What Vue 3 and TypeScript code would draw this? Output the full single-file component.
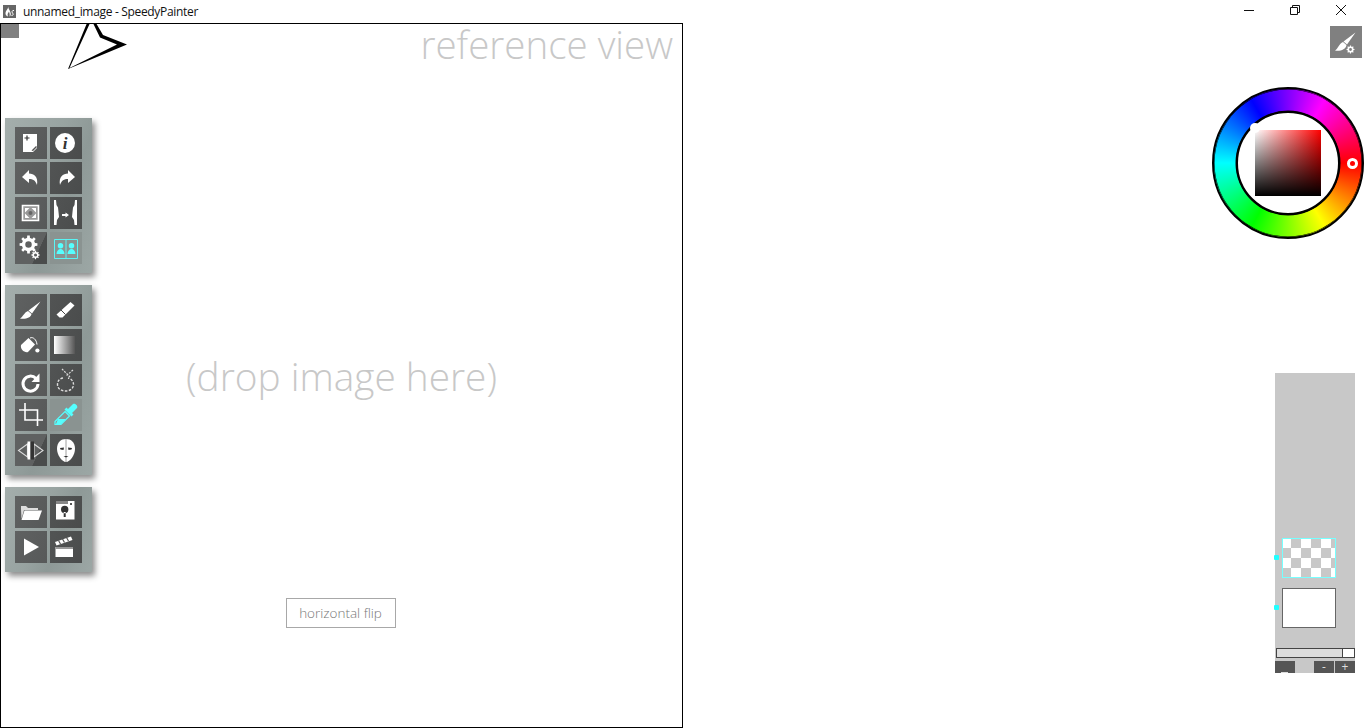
<script setup lang="ts">
interface Shape {
	d?: string
	fill?: string
	stroke?: string
	width?: number
	dash?: string
	text?: string
}

interface Tool {
	name: string
	active?: boolean
	shade?: boolean
}

// builds a toothed wheel path, used for the settings icons
function gear(cx: number, cy: number, r: number, teeth: number): string {
	const pts: string[] = []
	const step = (Math.PI * 2) / teeth
	for (let i = 0; i < teeth; i++) {
		const a = i * step
		const list: [number, number][] = [
			[r * 0.74, a - step * 0.5],
			[r * 0.74, a - step * 0.28],
			[r, a - step * 0.18],
			[r, a + step * 0.18],
			[r * 0.74, a + step * 0.28],
		]
		for (const [rad, ang] of list) {
			pts.push(`${(cx + rad * Math.cos(ang)).toFixed(2)} ${(cy + rad * Math.sin(ang)).toFixed(2)}`)
		}
	}
	const h = r * 0.36
	return (
		`M${pts.join("L")}Z` +
		`M${cx - h} ${cy}a${h} ${h} 0 1 0 ${h * 2} 0a${h} ${h} 0 1 0 ${-h * 2} 0Z`
	)
}

const W = "#fff"
const C = "#5ff"
const D = "#444"

const icons: Record<string, Shape[]> = {
	doc: [
		{ d: "M8 7H22V21L18 25H8Z", fill: W },
		{ d: "M9.500 11H14.500M12 8.500V13.500", stroke: "#333", width: 1.2 },
		{ d: "M16.500 23.500L21 19L22 20L18 24Z", fill: "#555" },
	],
	info: [
		{ d: "M5 16a10 10 0 1 0 20 0a10 10 0 1 0 -20 0Z", fill: W },
		{ text: "i", fill: "#333" },
	],
	undo: [{ d: "M7 15L14 8V11.500C19 11.500 23.500 15 22 23C20.500 18.500 18 17 14 17V21Z", fill: W }],
	redo: [{ d: "M25 15L18 8V11.500C13 11.500 8.500 15 10 23C11.500 18.500 14 17 18 17V21Z", fill: W }],
	fit: [
		{ d: "M7.500 8.500H23.500V23.500H7.500Z", fill: "#9a9a9a", stroke: W, width: 1.600 },
		{ d: "M10 11H14.500L10 15.500ZM21 11V15.500L16.500 11ZM10 21V16.500L14.500 21ZM21 21H16.500L21 16.500Z", fill: W },
		{ d: "M13.500 16a2 2 0 1 0 4 0a2 2 0 1 0 -4 0Z", fill: "#666" },
	],
	flip: [
		{ d: "M4 3H6L6.500 8L8 10.500L8.500 15L9 20L7 23L6.500 28H4Z", fill: W },
		{ d: "M27 3H25L24.500 8L23 10.500L22.500 15L22 20L24 23L24.500 28H27Z", fill: W },
		{ d: "M12 17H15.500V15.500L19 18L15.500 20.500V19H12Z", fill: W },
	],
	gear: [
		{ d: gear(13.5, 12.5, 9, 8), fill: W },
		{ d: gear(20.5, 23, 4.2, 8), fill: W },
	],
	people: [
		{ d: "M4.500 7.500H27.500V26.500H4.500ZM16 7.500V26.500", stroke: C, width: 0.9 },
		{ d: "M10.500 11a2.500 2.500 0 0 1 0 5.500a2.500 2.500 0 0 1 0 -5.500ZM6.500 22C6.500 19 8.500 17 10.500 17C12.500 17 14.500 19 14.500 22Z", fill: C },
		{ d: "M21.500 11a2.500 2.500 0 0 1 0 5.500a2.500 2.500 0 0 1 0 -5.500ZM17.500 22C17.500 19 19.500 17 21.500 17C23.500 17 25.500 19 25.500 22Z", fill: C },
	],
	brush: [
		{ d: "M25.500 7.500L17 19.500L13.500 16.500Z", fill: W },
		{ d: "M13 17L16.500 20C16 24 10 25.500 5 24.500C8 23 9 18.500 13 17Z", fill: W },
	],
	eraser: [
		{ d: "M20.500 8L24.500 11.500L12.500 23.500H9.500L6.500 20.500Z", fill: W },
		{ d: "M10.500 15.500L15.500 20.500", stroke: D, width: 1 },
	],
	bucket: [
		{ d: "M6 16L13.500 9L20 15.500L13 23C9.500 24 5 20.500 6 16Z", fill: W },
		{ d: "M15 9C18 7.500 21.500 10.500 22 15.500", stroke: W, width: 1 },
		{ d: "M20.300 21.500a2.100 2.100 0 1 0 4.200 0a2.100 2.100 0 1 0 -4.200 0Z", fill: W },
	],
	gradient: [{ d: "M4 7H25V25H4Z", fill: "url(#tool-gradient)" }],
	rotate: [
		{ d: "M21 14.500A7.500 7.500 0 1 0 23 20", stroke: W, width: 3 },
		{ d: "M24.500 9.500V18H16.500Z", fill: W },
	],
	lasso: [
		{ d: "M13 14C9.500 14.500 7.500 17 7.500 20.500C7.500 24.500 11 27 15.500 27C20 27 23.500 24.500 23.500 20.500C23.500 17 21 14.500 18 14", stroke: "#ddd", width: 1.400, dash: "2.500 1.500" },
		{ d: "M12 5L20 13M23 6L16 12", stroke: "#ddd", width: 1.200, dash: "2 1.200" },
	],
	crop: [{ d: "M10 4V21H28M4 11H22.500V27", stroke: W, width: 1.600 }],
	dropper: [
		{ d: "M18 10L23 5C25 3.500 28.500 7 27 9L22 14L23.500 15.500L21.500 17.500L14.500 10.500L16.500 8.500Z", fill: C },
		{ d: "M15 12.500L19.500 17L11 25.500H5L5 22.500Z", stroke: C, width: 1.200 },
		{ d: "M8 20L16 20L11 25H6Z", fill: C },
	],
	symmetry: [
		{ d: "M12.500 10L3.500 16.500L12.500 23ZM19 10L28 16.500L19 23Z", stroke: "#ddd", width: 1.100 },
		{ d: "M12.500 7.500H15.500V25.500H12.500Z", fill: W },
		{ d: "M15.500 7.500H19V25.500H15.500Z", fill: "#333" },
	],
	mask: [
		{ d: "M16 5C21 5 25 8 25 15C25 21 20 28 16 28C12 28 7 21 7 15C7 8 11 5 16 5Z", fill: W },
		{ d: "M16 5V28", stroke: "#888", width: 0.8 },
		{ d: "M10 14L14 13.500L13.500 16L10.500 15.500ZM22 14L18 13.500L18.500 16L21.500 15.500ZM13.500 22H18.500L16 23.500Z", fill: "#333" },
	],
	folder: [
		{ d: "M6 13V10H11L13 12H23V14H9L6.500 23Z", fill: "#ddd" },
		{ d: "M9.500 14.500H27L23.500 24H6.500Z", fill: W },
	],
	save: [
		{ d: "M6 5H24.500V23.500H6Z", fill: W },
		{ d: "M6 5H18V8H6Z", fill: "#888" },
		{ d: "M20 7H22V9H20Z", fill: "#555" },
		{ d: "M11 13.500a3.700 3.700 0 1 0 7.400 0a3.700 3.700 0 1 0 -7.400 0ZM13.700 16H15.700V21H13.700Z", fill: "#333" },
	],
	play: [{ d: "M9 7.500L24 16L9 24.500Z", fill: W }],
	clapper: [
		{ d: "M5.500 16H23V26H5.500Z", fill: W },
		{ d: "M5 11L21 5.500L22.500 9L6.500 14.500Z", fill: W },
		{ d: "M8.500 9.500L10.500 13M12.500 8L14.500 11.500M16.500 6.500L18.500 10", stroke: "#555", width: 1.200 },
		{ d: "M5.500 16H23V18H5.500Z", fill: "#999" },
	],
}

// tool groups, read top to bottom in two columns
const groups: Tool[][] = [
	[
		{ name: "doc" },
		{ name: "info" },
		{ name: "undo" },
		{ name: "redo" },
		{ name: "fit" },
		{ name: "flip" },
		{ name: "gear", shade: true },
		{ name: "people", active: true },
	],
	[
		{ name: "brush" },
		{ name: "eraser" },
		{ name: "bucket" },
		{ name: "gradient" },
		{ name: "rotate" },
		{ name: "lasso" },
		{ name: "crop" },
		{ name: "dropper", active: true },
		{ name: "symmetry", shade: true },
		{ name: "mask" },
	],
	[{ name: "folder" }, { name: "save" }, { name: "play" }, { name: "clapper" }],
]

const brushSettings = gear(20.5, 23.5, 4, 8)
</script>

<template>
	<div class="window">
		<header class="titlebar">
			<svg class="app-icon" width="13" height="13" viewBox="0 0 13 13">
				<rect width="13" height="13" fill="#666" />
				<path d="M5 1.500C5.500 4 3 5 2.500 8C2.300 10 3.500 11 5 11.500C4 9.500 5 8 6 6.500C6.500 8.500 7 9.500 6.500 11.500C8 10.500 8 9 7.500 7.500C7 5.500 5.500 4 5 1.500Z" fill="#fff" />
				<path d="M11 5.500C9 5 8.500 7 9.500 8C10.500 9 10.500 10.500 8.500 10.500" stroke="#fff" fill="none" />
			</svg>
			<span class="title">unnamed_image - SpeedyPainter</span>
			<div class="win-buttons">
				<button class="win-btn" aria-label="minimize">
					<svg width="12" height="12" viewBox="0 0 12 12"><path d="M1 6.500H11" stroke="#111" fill="none" /></svg>
				</button>
				<button class="win-btn" aria-label="restore">
					<svg width="12" height="12" viewBox="0 0 12 12"><path d="M1.500 3.500H8.500V10.500H1.500ZM3.500 3.500V1.500H10.500V8.500H8.500" stroke="#111" fill="none" /></svg>
				</button>
				<button class="win-btn" aria-label="close">
					<svg width="12" height="12" viewBox="0 0 12 12"><path d="M1 1L11 11M11 1L1 11" stroke="#111" fill="none" /></svg>
				</button>
			</div>
		</header>

		<div class="workspace">
			<main class="canvas">
				<div class="corner" />
				<svg class="pointer" width="70" height="50" viewBox="60 23 70 50">
					<path
						d="M68 69L87 23H96L103 35L127 44.500ZM69.500 68L117 44.500L100 37.500L93 23H90Z"
						fill="#000"
						fill-rule="evenodd"
					/>
				</svg>

				<div class="toolbars">
					<div v-for="(group, g) in groups" :key="g" class="panel">
						<button
							v-for="tool in group"
							:key="tool.name"
							class="tool"
							:class="{ active: tool.active, shade: tool.shade }"
							:aria-label="tool.name"
						>
							<svg width="32" height="32" viewBox="0 0 32 32">
								<template v-for="(s, i) in icons[tool.name]" :key="i">
									<text v-if="s.text" class="info-glyph" x="15" y="22" text-anchor="middle" :fill="s.fill">{{ s.text }}</text>
									<path
										v-else
										:d="s.d"
										:fill="s.fill || 'none'"
										:stroke="s.stroke"
										:stroke-width="s.width"
										:stroke-dasharray="s.dash"
									/>
								</template>
							</svg>
						</button>
					</div>
				</div>

				<div class="ref-label">reference view</div>
				<div class="drop-hint">(drop image here)</div>
				<button class="flip-btn">horizontal flip</button>
			</main>

			<aside class="side">
				<button class="brush-btn" aria-label="brush settings">
					<svg width="32" height="32" viewBox="0 0 32 32">
						<path d="M25.500 6.500L17 18.500L13.500 15.500Z" fill="#fff" />
						<path d="M13 16L16.500 19C16 23.500 10 25.500 5 24.500C8 23 9 17.500 13 16Z" fill="#fff" />
						<path :d="brushSettings" fill="#fff" fill-rule="evenodd" />
					</svg>
				</button>

				<div class="wheel">
					<div class="wheel-inner">
						<div class="sv-square" />
					</div>
					<span class="hue-handle" />
					<span class="sv-handle" />
				</div>

				<section class="layers">
					<div class="layer selected">
						<span class="layer-dot" />
						<div class="thumb checker" />
					</div>
					<div class="layer">
						<span class="layer-dot" />
						<div class="thumb plain" />
					</div>
					<div class="opacity"><span class="opacity-knob" /></div>
					<div class="layer-actions">
						<button class="layer-btn wide" aria-label="layer menu"><span class="btn-mark" /></button>
						<div class="layer-pair">
							<button class="layer-btn">-</button>
							<button class="layer-btn">+</button>
						</div>
					</div>
				</section>
			</aside>
		</div>

		<svg class="defs" width="0" height="0">
			<defs>
				<linearGradient id="tool-gradient" x1="0" x2="1" y1="0" y2="0">
					<stop offset="0" stop-color="#fff" />
					<stop offset="1" stop-color="#555" />
				</linearGradient>
			</defs>
		</svg>
	</div>
</template>

<style>
html,
body {
	margin: 0;
	background: #fff;
	overflow: hidden;
}
</style>

<style scoped>
.window {
	width: 1366px;
	height: 728px;
	display: flex;
	flex-direction: column;
	font-family: "Open Sans", "Liberation Sans", sans-serif;
	background: #fff;
}

.titlebar {
	height: 23px;
	display: flex;
	align-items: center;
	padding-left: 3px;
	flex-shrink: 0;
}

.title {
	margin-left: 7px;
	font-size: 12px;
	color: #111;
	letter-spacing: -0.32px;
}

.win-buttons {
	margin-left: auto;
	margin-right: 2px;
	display: flex;
	align-self: flex-start;
}

.win-btn {
	width: 46px;
	height: 20px;
	padding: 0;
	border: none;
	background: none;
	display: flex;
	align-items: center;
	justify-content: center;
}

.workspace {
	flex: 1;
	display: flex;
	min-height: 0;
}

.canvas {
	position: relative;
	box-sizing: border-box;
	width: 683px;
	height: 705px;
	border: 1px solid #000;
	display: flex;
	flex-direction: column;
	align-items: center;
}

.corner {
	position: absolute;
	left: 0;
	top: 0;
	width: 18px;
	height: 14px;
	background: #808080;
}

.pointer {
	position: absolute;
	left: 59px;
	top: -1px;
}

.toolbars {
	position: absolute;
	left: 4px;
	top: 94px;
	display: flex;
	flex-direction: column;
	gap: 12px;
}

.panel {
	width: 87px;
	box-sizing: border-box;
	padding: 9px 10px;
	display: grid;
	grid-template-columns: 32px 32px;
	gap: 3px;
	background: linear-gradient(112deg, #a4aeac 0%, #98a3a1 42%, #8e9997 62%, #9ca7a5 100%);
	box-shadow: 3px 4px 6px rgba(0, 0, 0, 0.45);
}

.tool {
	width: 32px;
	height: 32px;
	padding: 0;
	border: none;
	display: block;
	background: linear-gradient(115deg, #5f6161, #575959);
}

.tool:nth-child(even) {
	background: linear-gradient(115deg, #525454, #4a4c4c);
}

.tool.shade {
	background: linear-gradient(115deg, #5f6161 0%, #5f6161 68%, #4a4c4c 69%, #4a4c4c 100%);
}

.tool.active,
.tool.active:nth-child(even) {
	background: #8a9391;
}

.tool svg {
	display: block;
}

.info-glyph {
	font-family: "Liberation Serif", serif;
	font-style: italic;
	font-weight: 700;
	font-size: 17px;
}

.ref-label {
	align-self: flex-end;
	margin: 0 9px 0 0;
	font-size: 38.5px;
	font-weight: 300;
	line-height: 40px;
	color: #c8c8c8;
	white-space: nowrap;
}

.drop-hint {
	margin-top: 286px;
	font-size: 38.8px;
	font-weight: 300;
	line-height: 52px;
	color: #c8c8c8;
	white-space: nowrap;
}

.flip-btn {
	margin: 196px 2px 0 0;
	width: 110px;
	height: 30px;
	box-sizing: border-box;
	padding: 0;
	border: 1px solid #a8a8a8;
	background: #fff;
	font-family: inherit;
	font-size: 13.5px;
	font-weight: 300;
	color: #777;
}

.side {
	flex: 1;
	display: flex;
	flex-direction: column;
	align-items: flex-end;
}

.brush-btn {
	width: 32px;
	height: 32px;
	margin: 3px 4px 0 0;
	padding: 0;
	border: none;
	background: #808080;
}

.brush-btn svg {
	display: block;
}

.wheel {
	position: relative;
	width: 152px;
	height: 152px;
	margin: 29px 2px 0 0;
	box-sizing: border-box;
	border: 2px solid #000;
	border-radius: 50%;
	background: conic-gradient(from 90deg, #f00, #ff0, #0f0, #0ff, #00f, #f0f, #f00);
	box-shadow: inset 0 0 0 0.5px #000;
	display: flex;
	align-items: center;
	justify-content: center;
}

.wheel-inner {
	width: 104px;
	height: 104px;
	box-sizing: border-box;
	border: 2px solid #000;
	border-radius: 50%;
	background: #fff;
	box-shadow: 0 0 0 0.5px #000;
	display: flex;
	align-items: center;
	justify-content: center;
}

.sv-square {
	width: 66px;
	height: 66px;
	background:
		linear-gradient(to bottom, rgba(0, 0, 0, 0), #000),
		linear-gradient(to right, #fff, #f00);
}

.hue-handle {
	position: absolute;
	left: 133px;
	top: 69px;
	width: 11px;
	height: 11px;
	box-sizing: border-box;
	border: 3px solid #fff;
	border-radius: 50%;
}

.sv-handle {
	position: absolute;
	left: 36px;
	top: 34px;
	width: 10px;
	height: 10px;
	border-radius: 50%;
	background: #fff;
}

.layers {
	position: relative;
	width: 80px;
	height: 300px;
	margin: 134px 11px 0 0;
	box-sizing: border-box;
	background: #c8c8c8;
	display: flex;
	flex-direction: column;
	justify-content: flex-end;
}

.layer {
	position: relative;
	height: 40px;
	padding-left: 7px;
	margin-bottom: 10px;
}

.layer-dot {
	position: absolute;
	left: -1px;
	top: 17px;
	width: 5px;
	height: 5px;
	background: #2ff;
	border-radius: 1px;
}

.thumb {
	width: 54px;
	height: 40px;
	box-sizing: border-box;
}

.checker {
	border: 1px solid #7ff;
	background: conic-gradient(#c8c8c8 25%, #fff 0 50%, #c8c8c8 0 75%, #fff 0) -2px -1px / 20px 20px;
}

.plain {
	border: 1px solid #666;
	background: #fff;
}

.opacity {
	position: relative;
	height: 10px;
	margin: 10px 0 3px 1px;
	box-sizing: border-box;
	border: 1px solid #444;
	background: #ddd;
}

.opacity-knob {
	position: absolute;
	right: 0;
	top: 0;
	bottom: 0;
	width: 11px;
	background: #fff;
	border-left: 1px solid #444;
}

.layer-actions {
	height: 12px;
	display: flex;
	justify-content: space-between;
}

.layer-pair {
	display: flex;
	gap: 1px;
}

.layer-btn {
	width: 20px;
	height: 12px;
	padding: 0;
	border: none;
	background: #555;
	color: #ddd;
	font-family: inherit;
	font-size: 12px;
	line-height: 12px;
}

.layer-btn.wide {
	position: relative;
	overflow: hidden;
}

.btn-mark {
	position: absolute;
	left: 6px;
	bottom: 0;
	width: 7px;
	height: 1px;
	background: #ddd;
}

.defs {
	position: absolute;
}
</style>
